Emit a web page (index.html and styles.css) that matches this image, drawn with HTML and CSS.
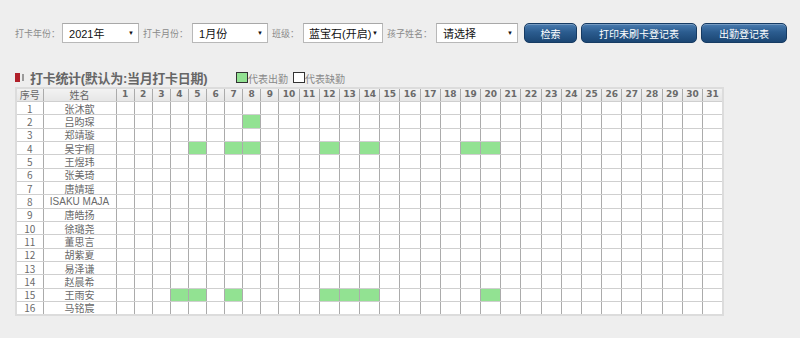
FILE: index.html
```html
<!DOCTYPE html>
<html lang="zh-CN">
<head>
<meta charset="utf-8">
<title>打卡统计</title>
<link rel="stylesheet" href="styles.css">
</head>
<body>
<div class="toolbar">
  <span class="label first">打卡年份：</span>
  <div class="select s-year"><span>2021年</span><span class="arrow">▼</span></div>
  <span class="label">打卡月份：</span>
  <div class="select s-month"><span>1月份</span><span class="arrow">▼</span></div>
  <span class="label">班级：</span>
  <div class="select s-class"><span>蓝宝石(开启)</span><span class="arrow">▼</span></div>
  <span class="label">孩子姓名：</span>
  <div class="select s-child"><span>请选择</span><span class="arrow">▼</span></div>
  <button class="btn b-search">检索</button>
  <button class="btn b-print">打印未刷卡登记表</button>
  <button class="btn b-att">出勤登记表</button>
</div>

<div class="title">
  <span class="mark"></span><span class="mark2"></span>
  <span class="title-text">打卡统计(默认为:当月打卡日期)</span>
  <span class="legend-box on-box"></span><span class="legend-text">代表出勤</span>
  <span class="legend-box off-box"></span><span class="legend-text">代表缺勤</span>
</div>

<table class="grid">
  <colgroup>
    <col class="c-no"><col class="c-name">
    <col class="c-d1"><col class="c-d1"><col class="c-d1"><col class="c-d1"><col class="c-d1"><col class="c-d1"><col class="c-d1"><col class="c-d1"><col class="c-d1">
    <col class="c-d2"><col class="c-d2"><col class="c-d2"><col class="c-d2"><col class="c-d2"><col class="c-d2"><col class="c-d2"><col class="c-d2"><col class="c-d2"><col class="c-d2"><col class="c-d2">
    <col class="c-d2"><col class="c-d2"><col class="c-d2"><col class="c-d2"><col class="c-d2"><col class="c-d2"><col class="c-d2"><col class="c-d2"><col class="c-d2"><col class="c-d2"><col class="c-d2">
  </colgroup>
  <thead>
    <tr>
      <th class="cn">序号</th><th class="cn">姓名</th>
      <th>1</th><th>2</th><th>3</th><th>4</th><th>5</th><th>6</th><th>7</th><th>8</th><th>9</th><th>10</th>
      <th>11</th><th>12</th><th>13</th><th>14</th><th>15</th><th>16</th><th>17</th><th>18</th><th>19</th><th>20</th>
      <th>21</th><th>22</th><th>23</th><th>24</th><th>25</th><th>26</th><th>27</th><th>28</th><th>29</th><th>30</th><th>31</th>
    </tr>
  </thead>
  <tbody>
    <tr><td>1</td><td>张沐歆</td><td></td><td></td><td></td><td></td><td></td><td></td><td></td><td></td><td></td><td></td><td></td><td></td><td></td><td></td><td></td><td></td><td></td><td></td><td></td><td></td><td></td><td></td><td></td><td></td><td></td><td></td><td></td><td></td><td></td><td></td><td></td></tr>
    <tr><td>2</td><td>吕昀琛</td><td></td><td></td><td></td><td></td><td></td><td></td><td></td><td class="on"></td><td></td><td></td><td></td><td></td><td></td><td></td><td></td><td></td><td></td><td></td><td></td><td></td><td></td><td></td><td></td><td></td><td></td><td></td><td></td><td></td><td></td><td></td><td></td></tr>
    <tr><td>3</td><td>郑靖璇</td><td></td><td></td><td></td><td></td><td></td><td></td><td></td><td></td><td></td><td></td><td></td><td></td><td></td><td></td><td></td><td></td><td></td><td></td><td></td><td></td><td></td><td></td><td></td><td></td><td></td><td></td><td></td><td></td><td></td><td></td><td></td></tr>
    <tr><td>4</td><td>吴宇桐</td><td></td><td></td><td></td><td></td><td class="on"></td><td></td><td class="on"></td><td class="on"></td><td></td><td></td><td></td><td class="on"></td><td></td><td class="on"></td><td></td><td></td><td></td><td></td><td class="on"></td><td class="on"></td><td></td><td></td><td></td><td></td><td></td><td></td><td></td><td></td><td></td><td></td><td></td></tr>
    <tr><td>5</td><td>王煜玮</td><td></td><td></td><td></td><td></td><td></td><td></td><td></td><td></td><td></td><td></td><td></td><td></td><td></td><td></td><td></td><td></td><td></td><td></td><td></td><td></td><td></td><td></td><td></td><td></td><td></td><td></td><td></td><td></td><td></td><td></td><td></td></tr>
    <tr><td>6</td><td>张美琦</td><td></td><td></td><td></td><td></td><td></td><td></td><td></td><td></td><td></td><td></td><td></td><td></td><td></td><td></td><td></td><td></td><td></td><td></td><td></td><td></td><td></td><td></td><td></td><td></td><td></td><td></td><td></td><td></td><td></td><td></td><td></td></tr>
    <tr><td>7</td><td>唐婧瑶</td><td></td><td></td><td></td><td></td><td></td><td></td><td></td><td></td><td></td><td></td><td></td><td></td><td></td><td></td><td></td><td></td><td></td><td></td><td></td><td></td><td></td><td></td><td></td><td></td><td></td><td></td><td></td><td></td><td></td><td></td><td></td></tr>
    <tr><td>8</td><td class="latin">ISAKU MAJA</td><td></td><td></td><td></td><td></td><td></td><td></td><td></td><td></td><td></td><td></td><td></td><td></td><td></td><td></td><td></td><td></td><td></td><td></td><td></td><td></td><td></td><td></td><td></td><td></td><td></td><td></td><td></td><td></td><td></td><td></td><td></td></tr>
    <tr><td>9</td><td>唐皓扬</td><td></td><td></td><td></td><td></td><td></td><td></td><td></td><td></td><td></td><td></td><td></td><td></td><td></td><td></td><td></td><td></td><td></td><td></td><td></td><td></td><td></td><td></td><td></td><td></td><td></td><td></td><td></td><td></td><td></td><td></td><td></td></tr>
    <tr><td>10</td><td>徐璐尧</td><td></td><td></td><td></td><td></td><td></td><td></td><td></td><td></td><td></td><td></td><td></td><td></td><td></td><td></td><td></td><td></td><td></td><td></td><td></td><td></td><td></td><td></td><td></td><td></td><td></td><td></td><td></td><td></td><td></td><td></td><td></td></tr>
    <tr><td>11</td><td>董思言</td><td></td><td></td><td></td><td></td><td></td><td></td><td></td><td></td><td></td><td></td><td></td><td></td><td></td><td></td><td></td><td></td><td></td><td></td><td></td><td></td><td></td><td></td><td></td><td></td><td></td><td></td><td></td><td></td><td></td><td></td><td></td></tr>
    <tr><td>12</td><td>胡紫夏</td><td></td><td></td><td></td><td></td><td></td><td></td><td></td><td></td><td></td><td></td><td></td><td></td><td></td><td></td><td></td><td></td><td></td><td></td><td></td><td></td><td></td><td></td><td></td><td></td><td></td><td></td><td></td><td></td><td></td><td></td><td></td></tr>
    <tr><td>13</td><td>易泽谦</td><td></td><td></td><td></td><td></td><td></td><td></td><td></td><td></td><td></td><td></td><td></td><td></td><td></td><td></td><td></td><td></td><td></td><td></td><td></td><td></td><td></td><td></td><td></td><td></td><td></td><td></td><td></td><td></td><td></td><td></td><td></td></tr>
    <tr><td>14</td><td>赵晨希</td><td></td><td></td><td></td><td></td><td></td><td></td><td></td><td></td><td></td><td></td><td></td><td></td><td></td><td></td><td></td><td></td><td></td><td></td><td></td><td></td><td></td><td></td><td></td><td></td><td></td><td></td><td></td><td></td><td></td><td></td><td></td></tr>
    <tr><td>15</td><td>王雨安</td><td></td><td></td><td></td><td class="on"></td><td class="on"></td><td></td><td class="on"></td><td></td><td></td><td></td><td></td><td class="on"></td><td class="on"></td><td class="on"></td><td></td><td></td><td></td><td></td><td></td><td class="on"></td><td></td><td></td><td></td><td></td><td></td><td></td><td></td><td></td><td></td><td></td><td></td></tr>
    <tr><td>16</td><td>马铭宸</td><td></td><td></td><td></td><td></td><td></td><td></td><td></td><td></td><td></td><td></td><td></td><td></td><td></td><td></td><td></td><td></td><td></td><td></td><td></td><td></td><td></td><td></td><td></td><td></td><td></td><td></td><td></td><td></td><td></td><td></td><td></td></tr>
  </tbody>
</table>
</body>
</html>
```
FILE: styles.css
```css
* { box-sizing: border-box; }

html, body {
  margin: 0;
  background: #eeeeee;
}

body {
  width: 800px;
  height: 338px;
  overflow: hidden;
  font-family: "Liberation Sans", "Noto Sans CJK SC", sans-serif;
}

.toolbar {
  display: flex;
  align-items: center;
  height: 20px;
  margin: 23px 0 0 15px;
}

.label {
  font-family: "Noto Sans CJK SC", sans-serif;
  font-size: 9px;
  color: #8a8a8a;
  white-space: nowrap;
  margin-right: 4px;
}

.label.first {
  margin-right: 2px;
}

.select {
  display: flex;
  align-items: center;
  justify-content: space-between;
  height: 20px;
  padding: 0 4px 0 6px;
  background: #fff;
  border: 1px solid #b8b8b8;
  border-top-color: #a8a8a8;
  font-family: "Liberation Sans", "Noto Sans CJK SC", sans-serif;
  font-size: 11px;
  color: #111;
  margin-right: 4px;
}

.arrow {
  font-size: 6px;
  color: #111;
}

.s-year { width: 77px; }
.s-month { width: 76px; }
.s-class { width: 80px; padding-left: 5px; }
.s-child { width: 82px; margin-right: 6px; }

.btn {
  height: 20px;
  padding: 0;
  border: 1px solid #163b63;
  border-radius: 5px;
  background: linear-gradient(#4a7cb0 0%, #2b5c8f 45%, #1b4673 100%);
  box-shadow: inset 0 1px 0 rgba(255, 255, 255, 0.25);
  color: #fff;
  font-family: "Noto Sans CJK SC", sans-serif;
  font-size: 10px;
  margin-right: 4px;
}

.b-search { width: 53px; }
.b-print { width: 116px; }
.b-att { width: 86px; }

.title {
  display: flex;
  align-items: center;
  height: 16px;
  margin: 26px 0 0 15px;
}

.mark {
  width: 5px;
  height: 9px;
  background: #b0202a;
}

.mark2 {
  width: 2px;
  height: 7px;
  background: #9a9a9a;
  margin-left: 2px;
  margin-right: 6px;
}

.title-text {
  width: 177px;
  font-family: "Liberation Sans", "Noto Sans CJK SC", sans-serif;
  font-size: 13px;
  font-weight: bold;
  color: #666;
  letter-spacing: -0.3px;
  white-space: nowrap;
  margin-right: 29px;
}

.legend-box {
  width: 12px;
  height: 11px;
  border: 1px solid #333;
}

.on-box { background: #92e292; }
.off-box { background: #fff; margin-left: 5px; }

.legend-text {
  font-family: "Noto Sans CJK SC", sans-serif;
  font-size: 10px;
  color: #888;
  align-self: flex-end;
  line-height: 12px;
}

.grid {
  margin: 2px 0 0 15px;
  width: 709px;
  table-layout: fixed;
  border-collapse: collapse;
  background: #fff;
  border: 2px solid #dcdcdc;
}

.c-no { width: 27px; }
.c-name { width: 73px; }
.c-d1 { width: 18.1px; }
.c-d2 { width: 20.18px; }

.grid th,
.grid td {
  height: 13.35px;
  padding: 0;
  text-align: center;
  border-top: 1px solid #cfcfcf;
  border-bottom: 1px solid #cfcfcf;
  border-left: 1px solid #ababab;
  border-right: 1px solid #ababab;
  line-height: 11px;
  white-space: nowrap;
  overflow: hidden;
}

.grid th {
  background: linear-gradient(#f2f2f2, #e6e6e6);
  font-family: "DejaVu Sans", sans-serif;
  font-size: 9px;
  font-weight: bold;
  color: #6a6a6a;
}

.grid th.cn {
  font-family: "Noto Sans CJK SC", sans-serif;
  font-weight: normal;
  font-size: 10px;
  color: #666;
}

.grid td {
  font-family: "Noto Sans CJK SC", sans-serif;
  font-size: 10px;
  color: #6a6a6a;
}

.grid td.latin {
  font-family: "Liberation Sans", sans-serif;
}

.grid td.on {
  background: #92e292;
}
```
